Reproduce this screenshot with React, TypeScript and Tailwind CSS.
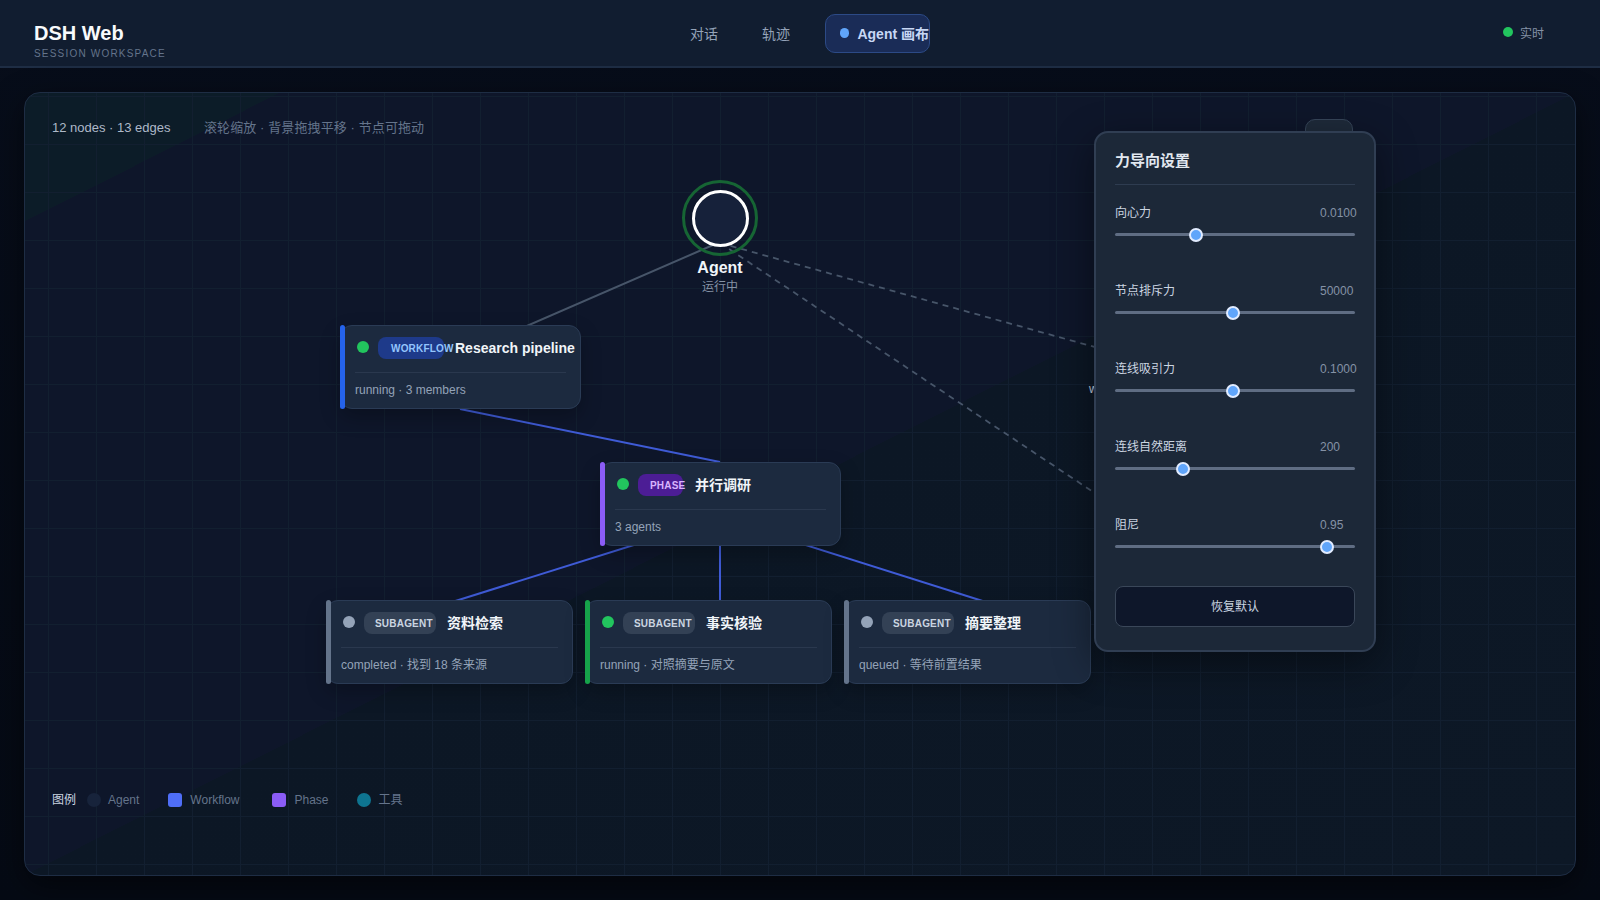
const nodes = [
  {
    pos: "left-[340px] top-[325px] w-[241px]",
    bar: "bg-[#2563eb]",
    dot: "bg-[#22c55e]",
    badge: "w-[66px] bg-[#1e3a8a] text-[#93c5fd] pl-[13px]",
    label: "WORKFLOW",
    title: "Research pipeline",
    titleGap: "ml-[11px]",
    sub: "running · 3 members",
  },
  {
    pos: "left-[600px] top-[462px] w-[241px]",
    bar: "bg-[#8b5cf6]",
    dot: "bg-[#22c55e]",
    badge: "w-[45px] bg-[#4c1d95] text-[#d8b4fe] pl-[12px]",
    label: "PHASE",
    title: "并行调研",
    titleGap: "ml-[12px]",
    sub: "3 agents",
  },
  {
    pos: "left-[326px] top-[600px] w-[247px]",
    bar: "bg-[#64748b]",
    dot: "bg-[#94a3b8]",
    badge: "w-[72px] bg-[#334155] text-[#cbd5e1] pl-[11px]",
    label: "SUBAGENT",
    title: "资料检索",
    titleGap: "ml-[11px]",
    sub: "completed · 找到 18 条来源",
  },
  {
    pos: "left-[585px] top-[600px] w-[247px]",
    bar: "bg-[#16a34a]",
    dot: "bg-[#22c55e]",
    badge: "w-[72px] bg-[#334155] text-[#cbd5e1] pl-[11px]",
    label: "SUBAGENT",
    title: "事实核验",
    titleGap: "ml-[11px]",
    sub: "running · 对照摘要与原文",
  },
  {
    pos: "left-[844px] top-[600px] w-[247px]",
    bar: "bg-[#64748b]",
    dot: "bg-[#94a3b8]",
    badge: "w-[72px] bg-[#334155] text-[#cbd5e1] pl-[11px]",
    label: "SUBAGENT",
    title: "摘要整理",
    titleGap: "ml-[11px]",
    sub: "queued · 等待前置结果",
  },
];

const sliders = [
  { label: "向心力", value: "0.0100", at: 81 },
  { label: "节点排斥力", value: "50000", at: 118 },
  { label: "连线吸引力", value: "0.1000", at: 118 },
  { label: "连线自然距离", value: "200", at: 68 },
  { label: "阻尼", value: "0.95", at: 212 },
];

function Edges() {
  return (
    <svg className="absolute left-0 top-0" width="1600" height="900" viewBox="0 0 1600 900" fill="none">
      <line x1="720" y1="242" x2="460" y2="355" stroke="#475569" strokeWidth="2" />
      <line x1="720" y1="243" x2="1300" y2="404" stroke="#475569" strokeWidth="1.8" strokeDasharray="6 5" />
      <line x1="720" y1="243" x2="1300" y2="630" stroke="#475569" strokeWidth="1.8" strokeDasharray="6 5" />
      <line x1="460" y1="409" x2="720" y2="462" stroke="#3f5bd6" strokeWidth="2" />
      <line x1="720" y1="518" x2="449" y2="603" stroke="#3f5bd6" strokeWidth="2" />
      <line x1="720" y1="540" x2="720" y2="602" stroke="#3f5bd6" strokeWidth="2" />
      <line x1="720" y1="518" x2="989" y2="603" stroke="#3f5bd6" strokeWidth="2" />
    </svg>
  );
}

function NodeCard({ n }: { n: (typeof nodes)[number] }) {
  return (
    <div className={`absolute ${n.pos} h-[84px] rounded-xl border border-[#2a3b55] bg-[#1c2a3f] pl-[14px] pr-[14px] pt-[11px] shadow-[0_8px_20px_rgba(0,0,0,0.25)]`}>
      <div className={`absolute -left-px -top-px -bottom-px w-[5px] rounded-[3px] ${n.bar}`} />
      <div className="flex h-[22px] items-center">
        <span className={`ml-[2px] mr-[3px] h-3 w-3 -translate-y-[1px] shrink-0 rounded-full ${n.dot}`} />
        <span className={`ml-[6px] flex h-[22px] shrink-0 items-center rounded-lg text-[10px] font-bold tracking-[0.2px] whitespace-nowrap ${n.badge}`}>
          {n.label}
        </span>
        <span className={`${n.titleGap} text-[14px] font-semibold whitespace-nowrap text-[#f1f5f9]`}>{n.title}</span>
      </div>
      <div className="mt-[13px] h-px bg-[#2a384e]" />
      <div className="mt-[9px] text-[12px] leading-4 whitespace-nowrap text-[#94a3b8]">{n.sub}</div>
    </div>
  );
}

function Slider({ s }: { s: (typeof sliders)[number] }) {
  return (
    <div className="h-[78px]">
      <div className="flex h-4 items-center justify-between text-[12px]">
        <span className="text-[#cbd5e1]">{s.label}</span>
        <span className="w-[35px] whitespace-nowrap text-[#8592a6]">{s.value}</span>
      </div>
      <div className="relative mt-[12px] h-[3px] rounded-full bg-[#5f6d83]">
        <span
          className="absolute top-1/2 h-[14px] w-[14px] -translate-x-1/2 -translate-y-1/2 rounded-full border-2 border-[#e2ecff] bg-[#60a5fa]"
          style={{ left: s.at }}
        />
      </div>
    </div>
  );
}

export default function App() {
  return (
    <div className="flex h-screen flex-col overflow-hidden bg-[linear-gradient(180deg,#070d1a_0%,#050a14_100%)] font-['Liberation_Sans','Noto_Sans_CJK_SC',sans-serif]">
      <header className="flex h-[68px] shrink-0 items-center border-b-2 border-[#1e2d44] bg-[#111d30]">
        <div className="w-[676px] shrink-0 pl-[34px] pt-[13px]">
          <h1 className="-mt-px text-[20px] leading-7 font-bold text-[#f8fafc]">DSH Web</h1>
          <p className="mt-px text-[10px] leading-3 tracking-[1.2px] text-[#64748b]">SESSION WORKSPACE</p>
        </div>
        <nav className="flex items-center text-[14px]">
          <span className="w-14 translate-y-px text-center text-[#94a3b8]">对话</span>
          <span className="ml-4 w-14 translate-y-px text-center text-[#94a3b8]">轨迹</span>
          <span className="ml-[21px] flex h-[39px] w-[105px] items-center rounded-[10px] border border-[#2c4a86] bg-[#1a2c57] pl-[14px] pt-[2px] font-semibold whitespace-nowrap text-[#c7d7f5]">
            <span className="mr-2 h-[10px] w-[10px] -translate-y-px rounded-full bg-[#60a5fa]" />
            Agent 画布
          </span>
        </nav>
        <div className="ml-auto flex translate-y-px items-center gap-[7px] pr-[56px] text-[12px] text-[#8592a6]">
          <span className="h-[10px] w-[10px] -translate-y-[2px] rounded-full bg-[#22c55e]" />
          实时
        </div>
      </header>

      <main className="flex-1 p-6">
        <section className="relative h-full overflow-hidden rounded-2xl border border-[#1e2d44] bg-[linear-gradient(to_bottom_right,#0c1c28_0%,#0c1c28_8.2%,#0e162a_8.2%,#0e162a_50%,#0c1725_50%,#0d1826_100%)] shadow-[0_10px_30px_rgba(0,0,0,0.5)]">
          <div className="absolute inset-0 bg-[linear-gradient(to_right,#121f30_1px,transparent_1px),linear-gradient(to_bottom,#121f30_1px,transparent_1px)] bg-size-[48px_48px] bg-position-[23px_3px]" />

          {/* canvas layer, coordinates are page coordinates */}
          <div className="absolute -left-[25px] -top-[93px] h-[900px] w-[1600px]">
            <Edges />

            <span className="absolute left-[1089px] top-[381px] text-[12px] leading-4 text-[#cbd5e1]">w</span>

            <div className="absolute left-[682px] top-[180px] flex h-[76px] w-[76px] items-center justify-center rounded-full border-[3px] border-[#166534]">
              <div className="h-[57px] w-[57px] rounded-full border-[3px] border-white bg-[#16213a]" />
            </div>
            <div className="absolute left-[660px] top-[258px] w-[120px] text-center">
              <div className="text-[16px] leading-5 font-semibold text-[#f1f5f9]">Agent</div>
              <div className="mt-px text-[12px] leading-4 text-[#8592a6]">运行中</div>
            </div>

            {nodes.map((n) => (
              <NodeCard key={n.title} n={n} />
            ))}

            <div className="absolute left-[1305px] top-[119px] h-7 w-12 rounded-t-[10px] border border-[#364559] bg-[#1e2a3a]" />

            {/* force settings */}
            <aside className="absolute left-[1094px] top-[131px] h-[521px] w-[282px] rounded-[14px] border-2 border-[#303e53] bg-[#1c2838] px-[19px] pt-4 shadow-[0_12px_40px_rgba(0,0,0,0.45)]">
              <h2 className="text-[15px] leading-6 font-semibold text-[#e2e8f0]">力导向设置</h2>
              <div className="mt-[11px] mb-5 h-px bg-[#2e3c50]" />
              {sliders.map((s) => (
                <Slider key={s.label} s={s} />
              ))}
              <button className="-mt-[9px] block h-[41px] w-full rounded-lg border border-[#3a4759] bg-[#0e172a] text-[12px] text-[#cbd5e1]">
                恢复默认
              </button>
            </aside>
          </div>

          <div className="absolute left-[27px] top-[27px] flex text-[13px] leading-4">
            <span className="w-[152px] text-[#aeb9c8]">12 nodes · 13 edges</span>
            <span className="tracking-[0.1px] text-[#64748b]">滚轮缩放 · 背景拖拽平移 · 节点可拖动</span>
          </div>

          <div className="absolute left-[27px] top-[699px] flex h-4 items-center text-[12px] text-[#64748b]">
            <span className="w-[35px] text-[#cbd5e1]">图例</span>
            <span className="h-[14px] w-[14px] rounded-full bg-[#17233b]" />
            <span className="ml-[7px]">Agent</span>
            <span className="ml-[29px] h-[14px] w-[14px] rounded-[3px] bg-[#4f6ef7]" />
            <span className="ml-2">Workflow</span>
            <span className="ml-[33px] h-[14px] w-[14px] rounded-[3px] bg-[#8b5cf6]" />
            <span className="ml-2">Phase</span>
            <span className="ml-[28px] h-[14px] w-[14px] rounded-full bg-[#0e7490]" />
            <span className="ml-2">工具</span>
          </div>
        </section>
      </main>
    </div>
  );
}
